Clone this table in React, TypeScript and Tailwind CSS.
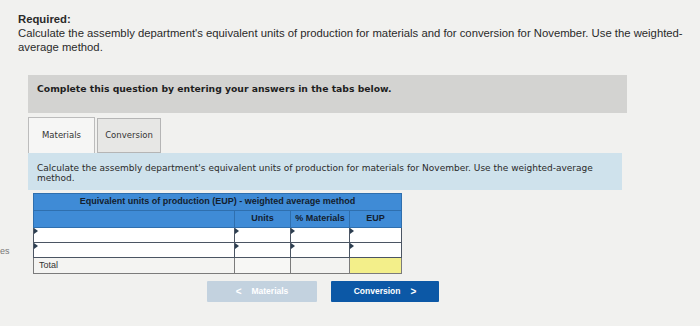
import React from 'react';

const Marker = () => (
  <span className="absolute left-0 top-0 w-0 h-0 border-t-[3px] border-b-[3px] border-l-[4px] border-t-transparent border-b-transparent border-l-[#2c3e50]" />
);

function InputCell({ w }: { w: string }) {
  return (
    <td className={`relative bg-white border-[1.5px] border-[#4b5563] p-0 ${w}`}>
      <Marker />
    </td>
  );
}

export default function App() {
  return (
    <div className="relative w-[700px] h-[326px] overflow-hidden bg-[#f1f1ef] text-[#222] font-['Liberation_Sans',Arial,sans-serif]">
      <div className="absolute left-0 top-[245px] text-[9px] text-[#777]">es</div>

      <div className="pl-[18px] pt-[12px] pr-[8px] text-[11.3px] leading-[14px] text-[#2a2a2a]">
        <div className="font-bold">Required:</div>
        <div>
          Calculate the assembly department's equivalent units of production for materials and for conversion for November. Use the weighted-
          <br />
          average method.
        </div>
      </div>

      <div className="ml-[28px] mt-[21px] w-[599px]">
        <div className="h-[38px] bg-[#d3d3d1] px-[9px] pt-[8px] font-['DejaVu_Sans',sans-serif] text-[9.25px] leading-[12px] font-bold text-[#1e1e1e]">
          Complete this question by entering your answers in the tabs below.
        </div>

        <div className="flex gap-[2px] mt-[4px] font-['DejaVu_Sans',sans-serif] text-[8.5px] text-[#333]">
          <div className="w-[67px] h-[36px] bg-[#f6f6f5] border border-b-0 border-[#bcbcbc] flex items-center justify-center">
            Materials
          </div>
          <div className="w-[64px] h-[35px] mt-[1px] bg-[#e7e7e5] border border-[#b5b5b5] flex items-center justify-center">
            Conversion
          </div>
        </div>

        <div className="w-[594px] h-[37px] bg-[#cfe2ec] px-[9px] pt-[10px] font-['DejaVu_Sans',sans-serif] text-[9px] leading-[10px] text-[#2a2a2a]">
          Calculate the assembly department's equivalent units of production for materials for November. Use the weighted-average
          <br />
          method.
        </div>

        <table className="ml-[5px] mt-[3px] border-collapse font-['Liberation_Sans',Arial,sans-serif] text-[9px]">
          <tbody>
            <tr className="h-[17px] bg-[#3f8bd6]">
              <th colSpan={4} className="border border-[#2f6fae] font-bold text-[#13202e] text-center">
                Equivalent units of production (EUP) - weighted average method
              </th>
            </tr>
            <tr className="h-[17px] bg-[#3f8bd6] font-bold text-[#13202e]">
              <td className="w-[201px] border border-[#2f6fae]" />
              <td className="w-[56px] border border-[#2f6fae] text-center">Units</td>
              <td className="w-[59px] border border-[#2f6fae] text-center">% Materials</td>
              <td className="w-[52px] border border-[#2f6fae] text-center">EUP</td>
            </tr>
            <tr className="h-[15px]">
              <InputCell w="w-[201px]" />
              <InputCell w="w-[56px]" />
              <InputCell w="w-[59px]" />
              <InputCell w="w-[52px]" />
            </tr>
            <tr className="h-[15px]">
              <InputCell w="w-[201px]" />
              <InputCell w="w-[56px]" />
              <InputCell w="w-[59px]" />
              <InputCell w="w-[52px]" />
            </tr>
            <tr className="h-[16px] bg-[#f4f4f2]">
              <td className="border border-[#7b7b7b] pl-[5px] text-[#333]">Total</td>
              <td className="border border-[#7b7b7b] bg-[#f7f7f5]" />
              <td className="border border-[#7b7b7b] bg-[#f3f3f1]" />
              <td className="border border-[#7b7b7b] bg-[#f3ef8a]" />
            </tr>
          </tbody>
        </table>

        <div className="flex gap-[14px] ml-[179px] mt-[7px] font-['Liberation_Sans',Arial,sans-serif] text-[8.5px] font-bold">
          <button className="w-[110px] h-[21px] bg-[#c3d2df] text-white flex items-center justify-center gap-[10px] rounded-[1px]">
            <span className="text-[10px]">&lt;</span>
            <span>Materials</span>
          </button>
          <button className="w-[108px] h-[21px] bg-[#0c58a6] text-white flex items-center justify-center gap-[10px] rounded-[1px]">
            <span>Conversion</span>
            <span className="text-[10px]">&gt;</span>
          </button>
        </div>
      </div>
    </div>
  );
}
